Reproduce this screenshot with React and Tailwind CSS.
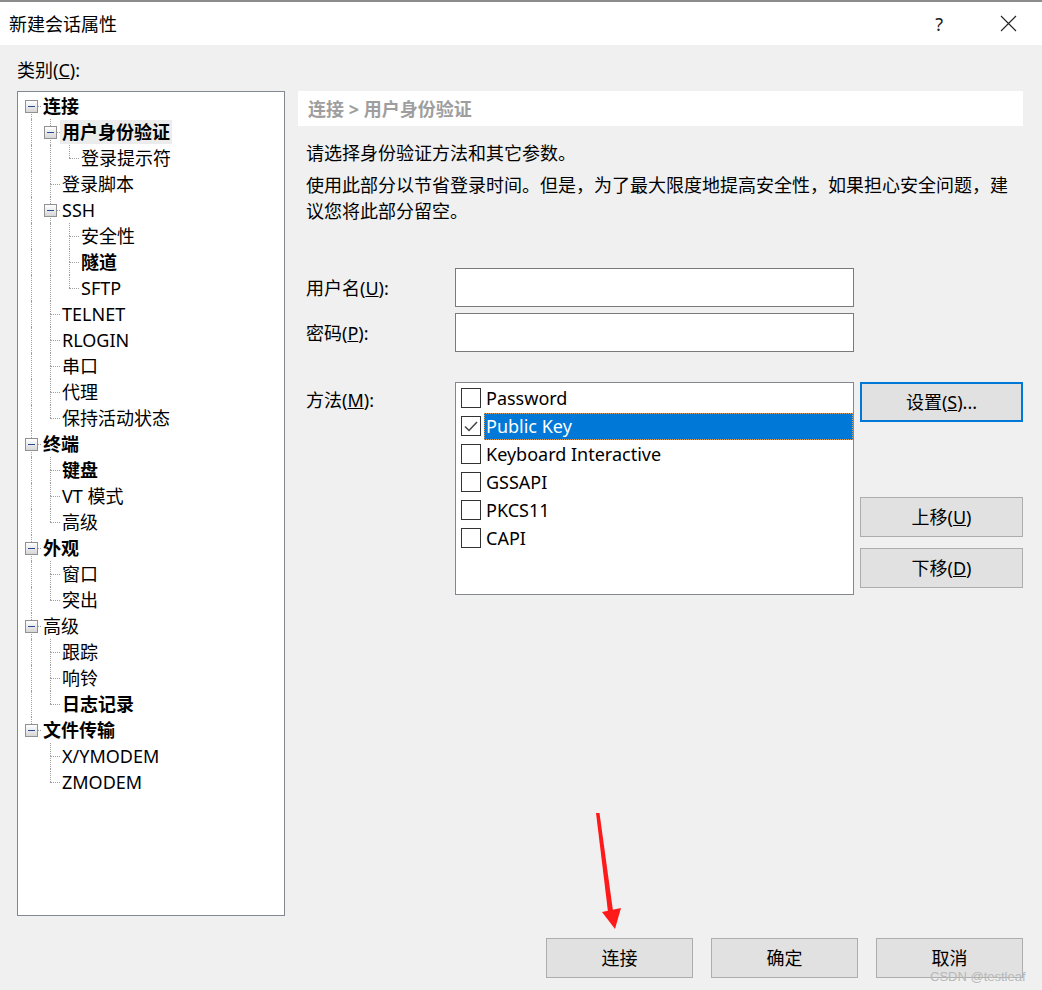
import React from "react";

const tree = [
  { t: "连接", b: 1, c: [
    { t: "用户身份验证", b: 1, sel: 1, c: [{ t: "登录提示符" }] },
    { t: "登录脚本" },
    { t: "SSH", c: [{ t: "安全性" }, { t: "隧道", b: 1 }, { t: "SFTP" }] },
    { t: "TELNET" }, { t: "RLOGIN" }, { t: "串口" }, { t: "代理" }, { t: "保持活动状态" },
  ] },
  { t: "终端", b: 1, c: [{ t: "键盘", b: 1 }, { t: "VT 模式" }, { t: "高级" }] },
  { t: "外观", b: 1, c: [{ t: "窗口" }, { t: "突出" }] },
  { t: "高级", c: [{ t: "跟踪" }, { t: "响铃" }, { t: "日志记录", b: 1 }] },
  { t: "文件传输", b: 1, c: [{ t: "X/YMODEM" }, { t: "ZMODEM" }] },
];

function flat(nodes, level, anc, out) {
  nodes.forEach((n, i) => {
    const hasNext = i < nodes.length - 1;
    out.push({ ...n, level, anc, hasNext, first: level === 0 && i === 0 });
    if (n.c) flat(n.c, level + 1, [...anc, hasNext], out);
  });
  return out;
}

const rows = flat(tree, 0, [], []);

function TreeRow({ r }) {
  return (
    <div className="flex h-[26px] items-center">
      {r.anc.map((a, i) => (
        <div key={i} className="relative h-full w-[19px] shrink-0">
          {a && <span className="absolute left-[9px] top-0 h-full border-l border-dotted border-[#a0a0a0]" />}
        </div>
      ))}
      <div className="relative h-full w-[19px] shrink-0">
        {!r.first && <span className="absolute left-[9px] top-0 h-[13px] border-l border-dotted border-[#a0a0a0]" />}
        {r.hasNext && <span className="absolute left-[9px] top-[13px] h-[13px] border-l border-dotted border-[#a0a0a0]" />}
        <span className="absolute left-[9px] top-[13px] w-[10px] border-t border-dotted border-[#a0a0a0]" />
        {r.c && (
          <span className="absolute left-[3px] top-[7px] flex h-[13px] w-[13px] items-center justify-center border border-[#919191] bg-linear-to-b from-white to-[#d6d6d6]">
            <span className="h-[1px] w-[7px] bg-[#2a4a96]" />
          </span>
        )}
      </div>
      <span
        className={
          "h-[24px] whitespace-nowrap px-[2px] text-[18px] leading-[24px] text-black " +
          (r.b ? "font-bold " : "") +
          (r.sel ? "bg-[#ececec]" : "")
        }
      >
        {r.t}
      </span>
    </div>
  );
}

function Btn({ children, focus }) {
  return (
    <div
      className={
        "flex h-[40px] w-[163px] items-center justify-center bg-[#e1e1e1] text-[18px] leading-[24px] text-black " +
        (focus ? "border-2 border-[#0078d7]" : "border border-[#adadad]")
      }
    >
      {children}
    </div>
  );
}

function Check({ checked }) {
  return (
    <span className="flex h-[20px] w-[20px] shrink-0 items-center justify-center border border-[#333333] bg-white">
      {checked && (
        <svg width="16" height="16" viewBox="0 0 16 16">
          <polyline points="2,8.5 6,12.5 14,4" fill="none" stroke="#444444" strokeWidth="1.5" />
        </svg>
      )}
    </span>
  );
}

const methods = ["Password", "Public Key", "Keyboard Interactive", "GSSAPI", "PKCS11", "CAPI"];

export default function App() {
  return (
    <div className="relative flex h-[990px] w-[1042px] flex-col overflow-hidden bg-[#f0f0f0] font-['Noto_Sans','Noto_Sans_CJK_SC',sans-serif] text-black">
      {/* title bar */}
      <div className="h-[2px] bg-[#8c8c8c]" />
      <div className="flex h-[43px] items-center bg-white pl-[9px]">
        <span className="text-[18px] leading-[24px]">新建会话属性</span>
        <div className="ml-auto flex items-center">
          <span className="mr-[57px] text-[18px] leading-[24px] text-[#222]">?</span>
          <svg width="17" height="17" viewBox="0 0 17 17" className="mr-[25px]">
            <path d="M1 1 L16 16 M16 1 L1 16" stroke="#222" strokeWidth="1.1" />
          </svg>
        </div>
      </div>

      {/* body */}
      <div className="flex">
        <div className="ml-[17px] flex w-[268px] flex-col">
          <div className="mt-[13px] h-[24px] text-[18px] leading-[24px]">
            类别(<u>C</u>):
          </div>
          <div className="mt-[9px] h-[825px] border border-[#828790] bg-white pl-[4px] pt-[1px]">
            {rows.map((r, i) => (
              <TreeRow key={i} r={r} />
            ))}
          </div>
        </div>

        <div className="ml-[13px] flex w-[725px] flex-col pt-[46px]">
          <div className="flex h-[35px] items-center bg-white pl-[10px] text-[18px] font-bold leading-[24px] text-[#9e9e9e]">
            连接 &gt; 用户身份验证
          </div>
          <div className="mt-[14px] pl-[8px] text-[18px] leading-[26px]">请选择身份验证方法和其它参数。</div>
          <div className="mt-[6px] pl-[8px] pr-[12px] text-[18px] leading-[26px]">
            使用此部分以节省登录时间。但是，为了最大限度地提高安全性，如果担心安全问题，建议您将此部分留空。
          </div>

          <div className="mt-[44px] flex items-center">
            <span className="w-[157px] pl-[8px] text-[18px] leading-[24px]">
              用户名(<u>U</u>):
            </span>
            <div className="h-[39px] w-[399px] border border-[#7a7a7a] bg-white" />
          </div>
          <div className="mt-[6px] flex items-center">
            <span className="w-[157px] pl-[8px] text-[18px] leading-[24px]">
              密码(<u>P</u>):
            </span>
            <div className="h-[39px] w-[399px] border border-[#7a7a7a] bg-white" />
          </div>

          <div className="mt-[30px] flex items-start">
            <span className="mt-[6px] w-[157px] pl-[8px] text-[18px] leading-[24px]">
              方法(<u>M</u>):
            </span>
            <div className="h-[213px] w-[399px] border border-[#828790] bg-white pt-[1px]">
              {methods.map((m, i) => (
                <div key={m} className="flex h-[28px] items-center pl-[5px]">
                  <Check checked={i === 1} />
                  <span
                    className={
                      "ml-[3px] flex h-[27px] items-center px-[2px] text-[18px] leading-[24px] " +
                      (i === 1
                        ? "flex-1 border border-dotted border-[#d9a066] bg-[#0078d7] pl-[1px] text-white"
                        : "text-black")
                    }
                  >
                    {m}
                  </span>
                </div>
              ))}
            </div>
            <div className="ml-[6px] flex flex-col">
              <Btn focus>
                设置(<u>S</u>)...
              </Btn>
              <div className="mt-[75px]">
                <Btn>
                  上移(<u>U</u>)
                </Btn>
              </div>
              <div className="mt-[11px]">
                <Btn>
                  下移(<u>D</u>)
                </Btn>
              </div>
            </div>
          </div>
        </div>
      </div>

      {/* bottom buttons */}
      <div className="mt-[22px] flex justify-end gap-[18px] pr-[19px]">
        {["连接", "确定", "取消"].map((t) => (
          <div
            key={t}
            className="flex h-[40px] w-[147px] items-center justify-center border border-[#adadad] bg-[#e1e1e1] text-[18px] leading-[24px]"
          >
            {t}
          </div>
        ))}
      </div>

      {/* red annotation arrow */}
      <svg className="pointer-events-none absolute left-0 top-0" width="1042" height="990">
        <polygon points="596,813 599.5,813 613,911 608,912" fill="#fe1a1a" />
        <polygon points="602,912 621,908 615,929" fill="#fe1a1a" />
      </svg>

      {/* watermark */}
      <span className="pointer-events-none absolute left-[930px] top-[969px] font-['Liberation_Sans',sans-serif] text-[13px] leading-[15px] text-[#b8b8b8]">
        CSDN @testleaf
      </span>
    </div>
  );
}
